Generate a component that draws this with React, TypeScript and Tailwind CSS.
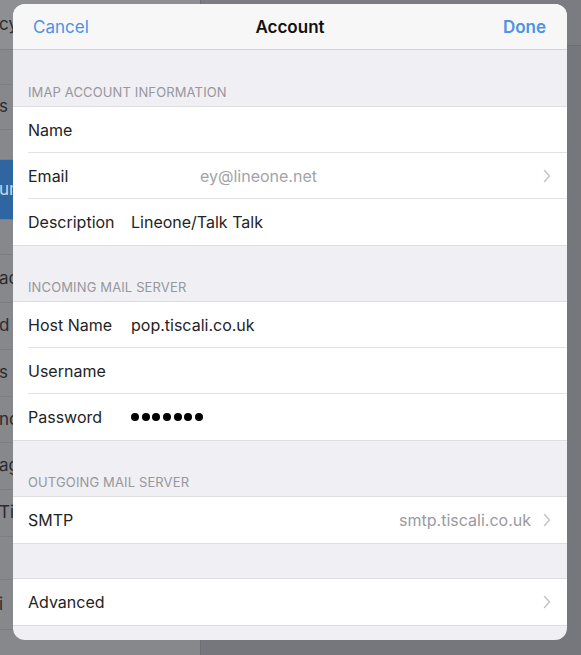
import React from "react";

const font = { fontFamily: "Inter, 'Noto Sans', sans-serif" };

function Chevron() {
  return (
    <svg width="8" height="14" viewBox="0 0 8 14" className="shrink-0">
      <polyline points="1.5,1.5 6.5,7 1.5,12.5" fill="none" stroke="#c4c4c9" strokeWidth="1.5" strokeLinecap="round" strokeLinejoin="round" />
    </svg>
  );
}

function SectionHeader({ title }: { title?: string }) {
  return (
    <div className="flex h-[57px] items-end pb-[5px] pl-[15px] text-[13px] uppercase tracking-[0.01em] text-[#97979c]">
      {title}
    </div>
  );
}

type Row = {
  label: string;
  value?: React.ReactNode;
  detail?: string;
  chevron?: boolean;
};

function Group({ rows }: { rows: Row[] }) {
  return (
    <div className="bg-white shadow-[0_1px_0_#dedee2,0_-1px_0_#dedee2]">
      {rows.map((r, i) => (
        <div
          key={r.label}
          className={`ml-[15px] flex h-[46px] items-center pr-[16px] text-[16px] text-[#232325] ${
            i < rows.length - 1 ? "border-b border-[#e2e2e6]" : ""
          }`}
        >
          <span className="w-[103px] shrink-0">{r.label}</span>
          <span className="flex-1">{r.value}</span>
          {r.detail && <span className="mr-[12px] text-[#9a9aa0]">{r.detail}</span>}
          {r.chevron && <Chevron />}
        </div>
      ))}
    </div>
  );
}

function PasswordDots() {
  return (
    <span className="flex items-center gap-[2.7px]" aria-label="•••••••">
      {[0, 1, 2, 3, 4, 5, 6].map((d) => (
        <span key={d} className="h-[8px] w-[8px] rounded-full bg-black" />
      ))}
    </span>
  );
}

const sidebar: { text: string; h: string; blue?: boolean; light?: boolean }[] = [
  { text: "cy", h: "h-[50px]", light: true },
  { text: "", h: "h-[35px]" },
  { text: "s", h: "h-[45px]" },
  { text: "", h: "h-[30px]" },
  { text: "un", h: "h-[60px]", blue: true },
  { text: "", h: "h-[35px]" },
  { text: "ac", h: "h-[48px]" },
  { text: "d", h: "h-[47px]" },
  { text: "s", h: "h-[47px]" },
  { text: "nc", h: "h-[46px]" },
  { text: "ag", h: "h-[47px]" },
  { text: "Tir", h: "h-[47px]" },
  { text: "", h: "h-[43px]" },
  { text: "i", h: "h-[50px]" },
];

export default function App() {
  return (
    <div className="relative flex h-[655px] w-[581px] overflow-hidden bg-[#76777d]" style={font}>
      {/* dimmed settings sidebar behind the sheet */}
      <aside className="flex w-[201px] flex-col border-r border-[#6c6d72] bg-[#87888c]">
        {sidebar.map((s, i) => (
          <div
            key={i}
            className={`flex ${s.h} items-center border-b border-[#7d7e82] text-[17px] ${
              s.blue ? "bg-[#2f66a2] text-[#c9d6e6]" : s.light ? "bg-[#8e8f92] text-[#2b2b2d]" : "text-[#2b2b2d]"
            }`}
          >
            <span className="-ml-[1px]">{s.text}</span>
          </div>
        ))}
      </aside>
      <main className="flex flex-1 flex-col">
        <div className="h-[46px] border-b border-[#6f7075] bg-[#7b7c81]" />
      </main>

      {/* account sheet */}
      <div className="absolute left-[13px] top-[4px] flex h-[636px] w-[554px] flex-col overflow-hidden rounded-[12px] bg-[#efeff4]">
        <header className="relative flex h-[46px] shrink-0 items-center justify-between border-b border-[#d4d4d8] bg-[#f7f7f8] pl-[20px] pr-[21px] pt-[3px] text-[17px]">
          <span className="text-[#4b93e4]">Cancel</span>
          <span className="absolute left-1/2 -translate-x-1/2 font-semibold text-[#111]">Account</span>
          <span className="font-semibold text-[#4b93e4]">Done</span>
        </header>

        <SectionHeader title="IMAP Account Information" />
        <Group
          rows={[
            { label: "Name", value: "" },
            {
              label: "Email",
              value: <span className="pl-[69px] text-[#a3a3a8]">ey@lineone.net</span>,
              chevron: true,
            },
            { label: "Description", value: "Lineone/Talk Talk" },
          ]}
        />

        <SectionHeader title="Incoming Mail Server" />
        <Group
          rows={[
            { label: "Host Name", value: "pop.tiscali.co.uk" },
            { label: "Username", value: "" },
            { label: "Password", value: <PasswordDots /> },
          ]}
        />

        <SectionHeader title="Outgoing Mail Server" />
        <Group rows={[{ label: "SMTP", detail: "smtp.tiscali.co.uk", chevron: true }]} />

        <div className="h-[36px]" />
        <Group rows={[{ label: "Advanced", chevron: true }]} />
      </div>
    </div>
  );
}
